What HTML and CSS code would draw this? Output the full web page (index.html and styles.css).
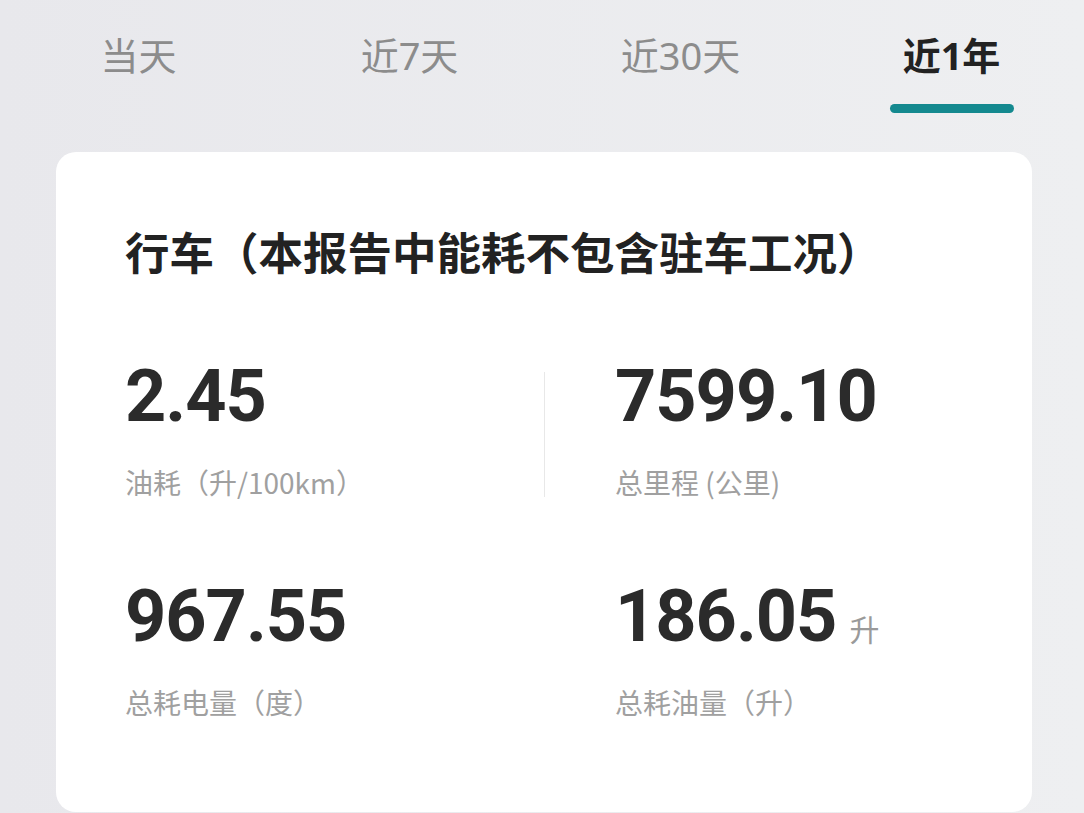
FILE: index.html
```html
<!DOCTYPE html>
<html lang="zh-CN">
<head>
    <meta charset="UTF-8">
    <meta name="viewport" content="width=device-width, initial-scale=1.0">
    <title>能耗报告</title>
    <link rel="stylesheet" href="styles.css">
</head>
<body>
    <!-- Period tabs -->
    <nav class="tabs">
        <div class="tab">当天</div>
        <div class="tab">近7天</div>
        <div class="tab">近30天</div>
        <div class="tab active">近1年</div>
    </nav>

    <section class="card">
        <h2 class="card-title">行车（本报告中能耗不包含驻车工况）</h2>
        <div class="stats">
            <div class="stat">
                <div class="value">2.45</div>
                <div class="label">油耗（升/100km）</div>
            </div>
            <div class="stat right divided">
                <div class="value">7599.10</div>
                <div class="label">总里程 (公里)</div>
            </div>
            <div class="stat">
                <div class="value">967.55</div>
                <div class="label">总耗电量（度）</div>
            </div>
            <div class="stat right">
                <div class="value">186.05<span class="unit">升</span></div>
                <div class="label">总耗油量（升）</div>
            </div>
        </div>
    </section>
</body>
</html>
```

FILE: styles.css
```css
body {
    margin: 0;
    height: 813px;
    overflow: hidden;
    font-family: "Noto Sans", "Noto Sans CJK SC", sans-serif;
    background: linear-gradient(to right, #e8e8ec, #eeeff1);
}

.tabs {
    display: grid;
    grid-template-columns: repeat(4, 271px);
    padding: 31px 0 0 3px;
}

.tab {
    display: flex;
    flex-direction: column;
    align-items: center;
    font-size: 38px;
    line-height: 48px;
    color: #8c8c8c;
}

.tab::after {
    content: "";
    display: block;
    width: 124px;
    height: 9px;
    margin-top: 25px;
    border-radius: 5px;
    background: transparent;
}

.tab.active {
    color: #222;
    font-weight: bold;
}

.tab.active::after {
    background: #14898f;
}

.card {
    width: 976px;
    margin: 39px 0 0 56px;
    padding: 73px 0 93px 69px;
    box-sizing: border-box;
    background: #fff;
    border-radius: 20px;
}

.card-title {
    margin: 0;
    font-size: 44.5px;
    line-height: 52px;
    font-weight: bold;
    color: #222;
    font-family: "Noto Sans CJK SC", sans-serif;
}

.stats {
    display: grid;
    grid-template-columns: 419px 1fr;
    row-gap: 82px;
    margin-top: 84px;
}

.stat.right {
    padding-left: 71px;
}

.stat.divided {
    position: relative;
}

.stat.divided::before {
    content: "";
    position: absolute;
    left: 0;
    top: 11px;
    bottom: 2px;
    width: 1px;
    background: #e8e8e8;
}

.value {
    height: 72px;
    font-family: Roboto, "Noto Sans", sans-serif;
    font-weight: bold;
    font-size: 72px;
    line-height: 72px;
    letter-spacing: -1px;
    color: #2b2b2b;
}

.unit {
    font-family: "Noto Sans CJK SC", sans-serif;
    font-weight: normal;
    font-size: 30px;
    line-height: 0;
    letter-spacing: 0;
    margin-left: 13px;
    color: #9a9a9a;
}

.label {
    margin-top: 33px;
    font-size: 28px;
    line-height: 33px;
    color: #a0a0a0;
    font-family: "Noto Sans CJK SC", sans-serif;
}
```
